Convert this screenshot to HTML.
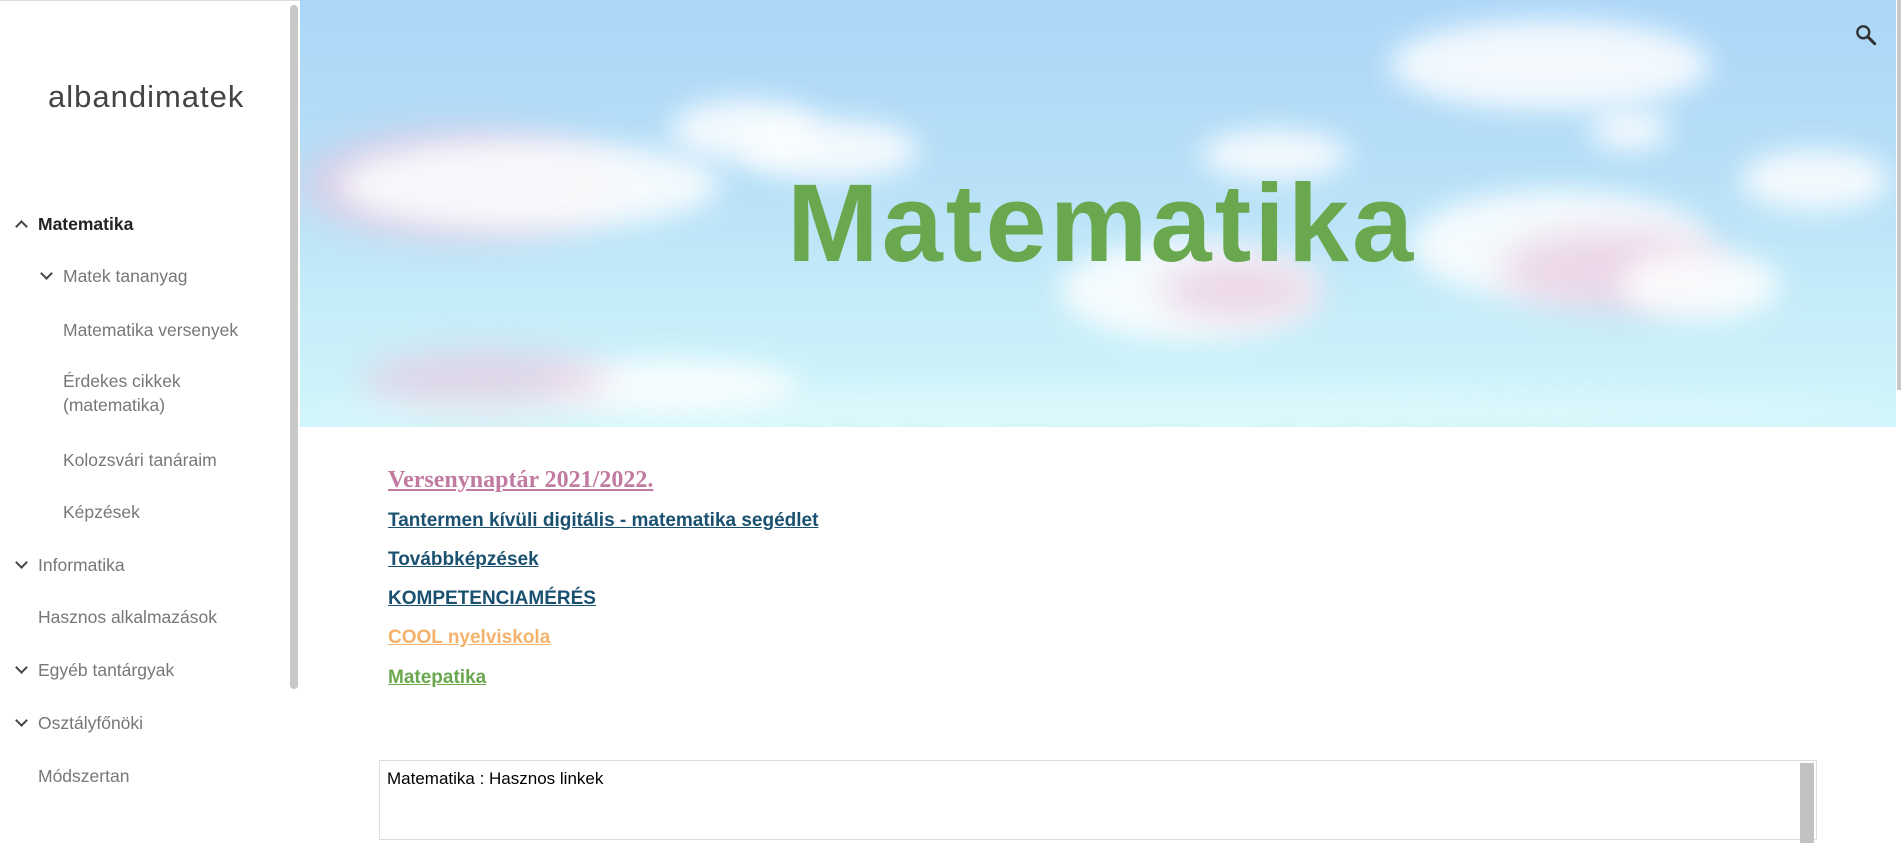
<!DOCTYPE html>
<html><head><meta charset="utf-8"><style>
*{margin:0;padding:0;box-sizing:border-box}
html,body{width:1901px;height:796px;overflow:hidden;background:#fff;font-family:"Liberation Sans",sans-serif}
.side{position:absolute;left:0;top:0;width:300px;height:796px;background:#fff;border-top:1px solid #ddd}
.title{position:absolute;left:48px;top:78px;font-size:31px;font-weight:300;color:#444;letter-spacing:1px}
.nav{position:absolute;font-size:17.5px;color:#777;white-space:nowrap}
.nav.b{color:#222;font-weight:bold}
.chev{position:absolute;width:9px;height:9px;border-right:2px solid #444;border-bottom:2px solid #444}
.sbar{position:absolute;left:290px;top:4px;width:8px;height:684px;background:#c8c8c8;border-radius:4px}
.banner{position:absolute;left:300px;top:0;width:1596px;height:427px;overflow:hidden;
background:linear-gradient(180deg,#acd6f8 0%,#b6dff7 40%,#c7eef9 75%,#d0f6fb 100%)}
.cl{position:absolute;border-radius:50%;background:#fff;filter:blur(14px);opacity:.85}
.pk{position:absolute;border-radius:50%;background:#e8c8e0;filter:blur(18px);opacity:.7}
.h{position:absolute;left:487px;top:160px;font-size:110px;font-weight:bold;color:#6aa84f;letter-spacing:3px;font-family:"Liberation Sans",sans-serif}
.lk{position:absolute;left:388px;font-weight:bold;text-decoration:underline;white-space:nowrap;font-size:19px}
.pscroll{position:absolute;left:1897px;top:0;width:4px;height:390px;background:#c8c8c8}
.box{position:absolute;left:379px;top:760px;width:1438px;height:80px;border:1px solid #ddd}
.box span{position:absolute;left:7px;top:8px;font-size:17px;color:#000}
.bs{position:absolute;right:2px;top:2px;width:14px;height:80px;background:#c1c1c1}
</style></head><body>
<div class="side">
<div class="title">albandimatek</div>
<div class="chev" style="left:17px;top:221px;transform:rotate(-135deg)"></div>
<div class="nav b" style="left:38px;top:213px">Matematika</div>
<div class="chev" style="left:42px;top:268px;transform:rotate(45deg)"></div>
<div class="nav" style="left:63px;top:265px">Matek tananyag</div>
<div class="nav" style="left:63px;top:319px">Matematika versenyek</div>
<div class="nav" style="left:63px;top:370px">Érdekes cikkek</div>
<div class="nav" style="left:63px;top:394px">(matematika)</div>
<div class="nav" style="left:63px;top:449px">Kolozsvári tanáraim</div>
<div class="nav" style="left:63px;top:501px">Képzések</div>
<div class="chev" style="left:17px;top:557px;transform:rotate(45deg)"></div>
<div class="nav" style="left:38px;top:554px">Informatika</div>
<div class="nav" style="left:38px;top:606px">Hasznos alkalmazások</div>
<div class="chev" style="left:17px;top:662px;transform:rotate(45deg)"></div>
<div class="nav" style="left:38px;top:659px">Egyéb tantárgyak</div>
<div class="chev" style="left:17px;top:715px;transform:rotate(45deg)"></div>
<div class="nav" style="left:38px;top:712px">Osztályfőnöki</div>
<div class="nav" style="left:38px;top:765px">Módszertan</div>
<div class="sbar"></div>
</div>
<div class="banner">
<div class="pk" style="left:0;top:130px;width:320px;height:110px"></div>
<div class="cl" style="left:40px;top:140px;width:380px;height:90px"></div>
<div class="cl" style="left:370px;top:100px;width:150px;height:60px"></div>
<div class="cl" style="left:440px;top:120px;width:180px;height:60px"></div>
<div class="cl" style="left:900px;top:130px;width:150px;height:50px"></div>
<div class="cl" style="left:1090px;top:20px;width:320px;height:90px"></div>
<div class="cl" style="left:1290px;top:110px;width:80px;height:40px"></div>
<div class="cl" style="left:1110px;top:190px;width:300px;height:110px"></div>
<div class="pk" style="left:1200px;top:230px;width:230px;height:80px"></div>
<div class="cl" style="left:1440px;top:150px;width:150px;height:60px"></div>
<div class="cl" style="left:760px;top:240px;width:260px;height:100px"></div>
<div class="pk" style="left:860px;top:260px;width:160px;height:60px"></div>
<div class="cl" style="left:1320px;top:250px;width:160px;height:70px"></div>
<div class="cl" style="left:240px;top:360px;width:260px;height:50px"></div>
<div class="pk" style="left:60px;top:350px;width:250px;height:60px"></div>
<div class="cl" style="left:0;top:390px;width:1596px;height:40px;opacity:.3"></div>
<div class="h">Matematika</div>
<svg style="position:absolute;left:1553px;top:22px" width="26" height="26" viewBox="0 0 24 24"><circle cx="9.5" cy="9.5" r="5.5" fill="none" stroke="#333" stroke-width="2.2"/><path d="M13.5 13.5L20 20" stroke="#333" stroke-width="2.8" stroke-linecap="round"/></svg>
</div>
<div class="pscroll"></div>
<div class="lk" style="top:467px;font-family:'Liberation Serif',serif;font-size:24px;color:#c27ba0">Versenynaptár 2021/2022.</div>
<div class="lk" style="top:510px;color:#1b5170">Tantermen kívüli digitális - matematika segédlet</div>
<div class="lk" style="top:549px;color:#1b5170">Továbbképzések</div>
<div class="lk" style="top:588px;color:#1b5170">KOMPETENCIAMÉRÉS</div>
<div class="lk" style="top:627px;color:#f6b26b">COOL nyelviskola</div>
<div class="lk" style="top:667px;color:#6aa84f">Matepatika</div>
<div class="box"><span>Matematika : Hasznos linkek</span><div class="bs"></div></div>
</body></html>
